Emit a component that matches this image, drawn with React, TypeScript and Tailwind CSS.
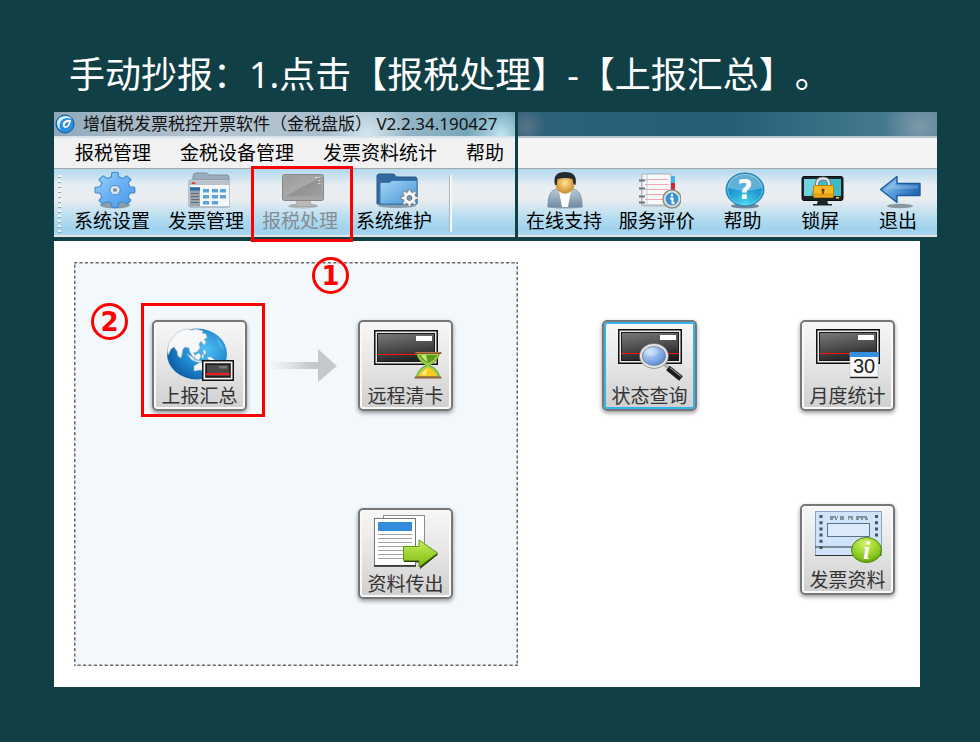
import type { ReactNode } from "react";

const gearPath = (cx: number, cy: number, outer: number, inner: number, teeth = 8) => {
  const step = (Math.PI * 2) / teeth;
  const at = (a: number, r: number) =>
    `${(cx + Math.cos(a) * r).toFixed(2)} ${(cy + Math.sin(a) * r).toFixed(2)}`;
  let d = "";
  for (let i = 0; i < teeth; i++) {
    const a = i * step - Math.PI / 2;
    d += `${i ? "L" : "M"}${at(a - step * 0.3, inner)} L${at(a - step * 0.2, outer)} Q${at(a, outer + 0.6)} ${at(a + step * 0.2, outer)} L${at(a + step * 0.3, inner)} `;
  }
  return d + "Z";
};

/* ---------- toolbar icons, drawn on a 94 x 40 field ---------- */

function ToolIcon({ children, x = 26 }: { children: ReactNode; x?: number }) {
  return (
    <svg className="h-10 w-12" viewBox={`${x} 0 48 40`} aria-hidden="true">
      {children}
    </svg>
  );
}

function GearIcon() {
  return (
    <ToolIcon x={23}>
      <defs>
        <linearGradient id="gearFill" x1="0" y1="0" x2="1" y2="1">
          <stop offset="0" stopColor="#9fd0fb" />
          <stop offset="0.5" stopColor="#68b1f5" />
          <stop offset="1" stopColor="#4a97e6" />
        </linearGradient>
      </defs>
      <ellipse cx="50" cy="34" rx="15" ry="3.5" fill="#4b6070" opacity="0.55" />
      <g transform="translate(50 19) scale(1.13 1)">
        <path d={gearPath(0, 0, 17.5, 13.6)} fill="url(#gearFill)" stroke="#3f88cc" strokeWidth="1" />
        <circle r="4.600" fill="#dfe6ec" stroke="#4a8fd0" strokeWidth="1" />
        <circle r="1.800" fill="#75899a" />
      </g>
    </ToolIcon>
  );
}

function InvoiceFolderIcon() {
  return (
    <ToolIcon x={23}>
      <path d="M34 9V6q0-4 3-4h10q2 0 3 2h18q2 0 2 2v6H34z" fill="#9aabbd" stroke="#7e8e9e" />
      <rect x="30" y="9" width="41" height="27" rx="1.5" fill="#f4f8fb" stroke="#8795a3" />
      <rect x="30.500" y="9.500" width="40" height="4.500" fill="#b9c2ca" />
      <path d="M32.500 13a2 2 0 0 1 4 0z" fill="#e0342c" />
      <rect x="31" y="16" width="10" height="19.500" fill="#9ba4ac" />
      <rect x="31" y="16.500" width="10" height="3" fill="#2b6cae" />
      <path d="M32 22.500h8M32 25.500h8M32 28.500h8M32 31.500h8" stroke="#636c75" strokeWidth="1" />
      <g fill="#5aa2dd">
        <rect x="44" y="18" width="6" height="3.500" /><rect x="53" y="18" width="6" height="3.500" /><rect x="61" y="18" width="6" height="3.500" />
        <rect x="44" y="24" width="6" height="3.500" /><rect x="53" y="24" width="6" height="3.500" /><rect x="61" y="24" width="6" height="3.500" />
        <rect x="44" y="30" width="6" height="3.500" /><rect x="53" y="30" width="6" height="3.500" />
      </g>
    </ToolIcon>
  );
}

function MonitorIcon() {
  return (
    <ToolIcon x={23}>
      <defs>
        <linearGradient id="grayScreen" x1="0" y1="0" x2="1" y2="1">
          <stop offset="0" stopColor="#9b9b9b" />
          <stop offset="0.5" stopColor="#a9a9a9" />
          <stop offset="0.51" stopColor="#929292" />
          <stop offset="1" stopColor="#a0a0a0" />
        </linearGradient>
      </defs>
      <ellipse cx="50" cy="35" rx="15" ry="2.500" fill="#98a2a8" opacity="0.6" />
      <path d="M44 29h13l1 5h5v1.500H38V34h5z" fill="#b9b9b9" stroke="#979797" strokeWidth="0.600" />
      <rect x="29.500" y="3.500" width="41" height="26" rx="2" fill="#a5a5a5" stroke="#858585" />
      <rect x="31.500" y="5.500" width="37" height="20" fill="url(#grayScreen)" />
      <path d="M62 6.500h3M66 6.500h1.500M65 9.500h2.500M65 12.500h2.500" stroke="#d8d8d8" />
    </ToolIcon>
  );
}

function MaintenanceIcon() {
  return (
    <ToolIcon x={23}>
      <defs>
        <linearGradient id="folderBlue" x1="0" y1="0" x2="1" y2="1">
          <stop offset="0" stopColor="#a5d5f6" />
          <stop offset="1" stopColor="#4594d3" />
        </linearGradient>
      </defs>
      <ellipse cx="50" cy="34.500" rx="19" ry="2.500" fill="#44617a" opacity="0.55" />
      <path d="M30 33V5q0-2 2-2h14q2 0 3 3h19q2 0 2 2v25z" fill="#34699f" stroke="#28578a" />
      <path d="M33 33V13q0-1.500 1.500-1.500h8L45 9.500h25V31q0 2-2 2z" fill="url(#folderBlue)" stroke="#3878ae" />
      <path d={gearPath(62.5, 27, 8.5, 6.4)} fill="#f2f4f6" stroke="#69757f" strokeWidth="0.900" />
      <circle cx="62.500" cy="27" r="2.400" fill="#7d97ab" stroke="#66717a" />
    </ToolIcon>
  );
}

function SupportIcon() {
  return (
    <ToolIcon x={26}>
      <defs>
        <linearGradient id="suit" x1="0" y1="0" x2="0" y2="1">
          <stop offset="0" stopColor="#bccbd8" />
          <stop offset="1" stopColor="#6f8ba1" />
        </linearGradient>
        <radialGradient id="face" cx="0.5" cy="0.45" r="0.600">
          <stop offset="0" stopColor="#ffe08f" />
          <stop offset="1" stopColor="#c68724" />
        </radialGradient>
      </defs>
      <ellipse cx="51" cy="35.500" rx="18" ry="2" fill="#516a7b" opacity="0.500" />
      <path d="M34 36q-1-15 8-18l9 3 9-3q9 3 8 18z" fill="url(#suit)" stroke="#7890a3" strokeWidth="0.800" />
      <path d="M45 20l6 3 6-3-3 16h-6z" fill="#fafcfd" />
      <ellipse cx="51" cy="13" rx="9.500" ry="9.500" fill="url(#face)" />
      <path d="M41 14Q38 1 51 1t10.500 13l-2-1-1-5q-7-2-15 0l-1 6z" fill="#252a2f" />
    </ToolIcon>
  );
}

function ReviewIcon() {
  return (
    <ToolIcon x={24}>
      <rect x="32" y="4" width="30" height="32" rx="2" fill="#c9cdd1" />
      <rect x="33" y="3" width="29" height="31" rx="1" fill="#f9f9fa" stroke="#a9adb1" />
      <path d="M36 8.500h23M36 13.500h23M36 18.500h23M36 23.500h23M36 28.500h18" stroke="#f2a5aa" />
      <path d="M38 3v31" stroke="#9cc9e8" strokeWidth="0.800" />
      <path d="M30 9.500h6M30 17.500h6M30 25.500h6M30 31.500h6" stroke="#6d7378" strokeWidth="2" />
      <rect x="62" y="5" width="4" height="7" fill="#42b4e8" />
      <rect x="62" y="12" width="4" height="8" fill="#d5262d" />
      <circle cx="63" cy="28" r="9" fill="#e2e5dd" stroke="#8c918b" strokeWidth="1.500" />
      <circle cx="63" cy="28" r="6.500" fill="#3b93d5" />
      <path d="M63 23v2.500M61 27.500h2.500v4.500h2" fill="none" stroke="#fff" strokeWidth="2" />
    </ToolIcon>
  );
}

function HelpIcon() {
  return (
    <ToolIcon x={24}>
      <defs>
        <radialGradient id="helpBall" cx="0.5" cy="0.950" r="0.900">
          <stop offset="0" stopColor="#4cd4ef" />
          <stop offset="0.600" stopColor="#1b96cf" />
          <stop offset="1" stopColor="#2f8fc0" />
        </radialGradient>
      </defs>
      <ellipse cx="51" cy="35" rx="14" ry="2.500" fill="#47606e" opacity="0.700" />
      <ellipse cx="51" cy="18.500" rx="19" ry="16.500" fill="url(#helpBall)" stroke="#1f7fae" />
      <ellipse cx="51" cy="18.500" rx="17.500" ry="15" fill="none" stroke="#7fd0ee" opacity="0.700" />
      <path d="M34 17a17 14 0 0 1 34 0q-17 5-34 0z" fill="#fff" opacity="0.280" />
      <text x="51" y="28" textAnchor="middle" fontSize="26" fontWeight="700" fill="#fff" fontFamily="DejaVu Sans, sans-serif">?</text>
    </ToolIcon>
  );
}

function LockIcon() {
  return (
    <ToolIcon x={25}>
      <rect x="31" y="5.500" width="41" height="24" rx="2" fill="#1d2226" stroke="#0d1012" />
      <rect x="33" y="8" width="37" height="17" fill="#3bbccb" />
      <path d="M33 8h16L39 25h-6z" fill="#6ed3dc" />
      <path d="M47 29h9l1 4h4v1.500H42V33h4z" fill="#1d2226" />
      <path d="M46 17v-4q0-5.500 6-5.500t6 5.500v4" fill="none" stroke="#777e82" strokeWidth="4" />
      <path d="M46 17v-4q0-5.500 6-5.500t6 5.500v4" fill="none" stroke="#e4e8ea" strokeWidth="2" />
      <rect x="42.500" y="14.500" width="20" height="12" rx="1" fill="#f8ba22" stroke="#bd7f0d" />
      <path d="M43 24h19" stroke="#e89d12" strokeWidth="3" />
      <circle cx="52" cy="19" r="1.600" fill="#5c3b04" />
      <path d="M52 19v4" stroke="#5c3b04" strokeWidth="1.600" />
      <rect x="65" y="26" width="3" height="1.500" fill="#f3d93b" />
    </ToolIcon>
  );
}

function ExitIcon() {
  return (
    <ToolIcon x={25}>
      <defs>
        <linearGradient id="exitArrow" x1="0" y1="0" x2="1" y2="0.600">
          <stop offset="0" stopColor="#3d85cb" />
          <stop offset="0.350" stopColor="#6faee6" />
          <stop offset="1" stopColor="#1d62b0" />
        </linearGradient>
      </defs>
      <ellipse cx="51" cy="35" rx="13" ry="2.200" fill="#64737c" opacity="0.700" />
      <path d="M31.500 18.500L48 5.500v7h23v12H48v7z" fill="url(#exitArrow)" stroke="#1d5aa2" strokeWidth="1.400" strokeLinejoin="round" />
      <path d="M35 18.500L46.500 9.500v5h22.500v3z" fill="#fff" opacity="0.180" />
    </ToolIcon>
  );
}

/* ---------- tile icons, drawn on an 80 x 60 field ---------- */

function TileIcon({ children }: { children: ReactNode }) {
  return (
    <svg className="h-[60px] w-20" viewBox="0 0 80 60" aria-hidden="true">
      {children}
    </svg>
  );
}

function CardDevice({ id }: { id: string }) {
  return (
    <>
      <defs>
        <linearGradient id={id} x1="0.200" y1="0" x2="0.500" y2="1">
          <stop offset="0" stopColor="#757575" />
          <stop offset="0.600" stopColor="#474747" />
          <stop offset="1" stopColor="#1f1f1f" />
        </linearGradient>
      </defs>
      <rect x="8.750" y="3.750" width="62.500" height="33.500" fill="#e9e9e9" stroke="#111" strokeWidth="1.500" />
      <rect x="11.500" y="6.500" width="57" height="28" fill={`url(#${id})`} stroke="#181818" />
      <rect x="50" y="9" width="16" height="5" fill="#fff" />
      <rect x="11" y="27" width="58" height="1" fill="#ff1010" />
    </>
  );
}

function GlobeIcon() {
  return (
    <TileIcon>
      <defs>
        <radialGradient id="ocean" cx="0.650" cy="0.400" r="0.650">
          <stop offset="0" stopColor="#4fc0f3" />
          <stop offset="0.600" stopColor="#218bd2" />
          <stop offset="1" stopColor="#0e62aa" />
        </radialGradient>
      </defs>
      <ellipse cx="37" cy="28" rx="30" ry="25.500" fill="url(#ocean)" />
      <path
        d="M7.500 24Q8 17 12 12 17 6 22 4l5-1 5 1 4-1 7 2-1 2 4 1 1 4-3 1 2 3-2 3-3-4-2 3 1 4-3 4-4 1 2 2 1 4-3-2-3-5-1-4-4-1-2 2-1 5-1 4-3-2-1-5-3-4-3 2-3 6z"
        fill="#f6f8fa"
        stroke="#aebdc8"
        strokeWidth="0.600"
        strokeLinejoin="round"
      />
      <path
        d="M27 28l4 2 4 4 6 1 2 2-6-1-5-2zM35 29l4-2 2 3-2 4-4-1zM42 28l2 1-1 4-1-1zM44 23l2 3-1 3-2-3zM47 31l4 0 5 4-2 1-5-2zM34 40l5-3 3-1 2 2 2-3 4 4v5l-5 1-5-1-6 1z"
        fill="#f4f6f7"
        stroke="#9fb4c3"
        strokeWidth="0.500"
      />
      <path d="M56 11q7 6 8 14-5-4-8-14z" fill="#fff" opacity="0.180" />
      <rect x="42.750" y="34.750" width="30.500" height="19.500" fill="#f2f2f2" stroke="#111" strokeWidth="1.500" />
      <rect x="46" y="38" width="24" height="13" fill="#4a4a4a" stroke="#111" strokeWidth="1.500" />
      <rect x="59" y="40" width="8" height="2.500" fill="#777" />
      <rect x="46" y="47" width="24" height="2" fill="#f01818" />
    </TileIcon>
  );
}

function HourglassIcon() {
  return (
    <TileIcon>
      <g transform="translate(0 1)">
        <CardDevice id="deviceClear" />
      </g>
      <path d="M50.500 27h23q-1.500 8-10 12.500 8.500 3 10 11.500h-23q1.500-8.500 10-11.500-8.500-4.500-10-12.500z" fill="#9fd04f" stroke="#5f9a20" />
      <path d="M53 29h18q-2 5-9 8-7-3-9-8z" fill="#5d9a1e" />
      <path d="M55 29h5l1.500 7q-5-3-6.500-7z" fill="#c4e67a" />
      <path d="M53 50q2-6 9-8.500 7 2.500 9 8.500z" fill="#ffcb1c" />
      <path d="M56 49q1-4 5-6l-1 6z" fill="#fff3a0" />
      <path d="M49.500 27h25M49.500 51.500h25" stroke="#8b5529" strokeWidth="2.200" strokeLinecap="round" />
      <path d="M50 26.400h24M50 51h24" stroke="#c48b52" strokeWidth="0.700" />
    </TileIcon>
  );
}

function MagnifierIcon() {
  return (
    <TileIcon>
      <defs>
        <radialGradient id="lens" cx="0.350" cy="0.300" r="0.800">
          <stop offset="0" stopColor="#c8defb" />
          <stop offset="0.600" stopColor="#79a6e6" />
          <stop offset="1" stopColor="#4371bd" />
        </radialGradient>
      </defs>
      <CardDevice id="deviceStatus" />
      <path d="M54 38l6 5" stroke="#b5b5b5" strokeWidth="4" />
      <path d="M58 42l13 10.500" stroke="#1b1b1b" strokeWidth="6" />
      <path d="M60 41.500l11 9" stroke="#8a8a8a" strokeWidth="1.200" />
      <ellipse cx="44" cy="30" rx="13" ry="11" fill="url(#lens)" stroke="#85878b" strokeWidth="3.500" />
      <ellipse cx="44" cy="30" rx="13" ry="11" fill="none" stroke="#e3e5e8" strokeWidth="2" />
      <ellipse cx="41" cy="26" rx="7" ry="4" fill="#fff" opacity="0.250" />
    </TileIcon>
  );
}

function CalendarIcon() {
  return (
    <TileIcon>
      <CardDevice id="deviceMonth" />
      <rect x="42" y="27" width="28" height="24" fill="#fafafa" stroke="#bfc3c6" strokeWidth="0.600" />
      <path d="M42 51.500h28" stroke="#222" strokeWidth="1.400" />
      <rect x="42" y="26" width="29" height="5" fill="#3490dc" />
      <text x="56" y="47" textAnchor="middle" fontSize="20" fill="#222" fontFamily="Liberation Sans, sans-serif">30</text>
    </TileIcon>
  );
}

function ExportIcon() {
  return (
    <TileIcon>
      <defs>
        <linearGradient id="exportArrow" x1="0" y1="0" x2="0" y2="1">
          <stop offset="0" stopColor="#c5ee5c" />
          <stop offset="1" stopColor="#7dbb10" />
        </linearGradient>
      </defs>
      <rect x="17.500" y="1.500" width="41" height="47" fill="#fdfdfd" stroke="#8d8d8d" />
      <rect x="8.500" y="4.500" width="41" height="47" fill="#fff" stroke="#777" />
      <path d="M8 52h42" stroke="#222" strokeWidth="1.600" />
      <rect x="12" y="8" width="34" height="9" fill="#338bdb" />
      <path d="M12 20.500h34M12 24.500h34M12 28.500h34M12 32.500h34M12 36.500h34M12 40.500h34M12 44.500h34" stroke="#a2a2a2" strokeWidth="1.200" />
      <path d="M38 33.500h16V27l18 13.500L54 55v-7H38z" fill="#2c3a12" />
      <path d="M37.500 32.500H53V26l18.500 13L53 53v-6.500H37.500z" fill="url(#exportArrow)" stroke="#5f9610" />
    </TileIcon>
  );
}

function InvoiceInfoIcon() {
  return (
    <TileIcon>
      <defs>
        <radialGradient id="infoBall" cx="0.450" cy="0.250" r="0.800">
          <stop offset="0" stopColor="#d2f266" />
          <stop offset="0.700" stopColor="#85c81c" />
          <stop offset="1" stopColor="#5c9a0a" />
        </radialGradient>
      </defs>
      <rect x="7.500" y="1.500" width="66" height="44" fill="#cfe4fa" stroke="#86a5c4" />
      <path d="M7 37h66M7 45.500h66" stroke="#2d343b" strokeWidth="1.200" />
      <path d="M13 5v36M68.500 5v24" stroke="#4d5358" strokeWidth="3" strokeDasharray="3 3.200" />
      <path d="M22 7h6m1 0h1m2 0h4M22 9h3m2 0h2m3 0h4M40 7h5m3 0h11M40 9h1m2 0h2m3 0h3m2 0h2m2 0h3" stroke="#6b767f" strokeWidth="1.500" />
      <rect x="19.500" y="13.500" width="42" height="13" fill="#dbeafa" stroke="#5f7184" />
      <ellipse cx="58.500" cy="40" rx="15" ry="12.500" fill="url(#infoBall)" stroke="#4f850c" />
      <text x="58.500" y="49" textAnchor="middle" fontSize="26" fontWeight="700" fontStyle="italic" fill="#fff" fontFamily="Liberation Serif, serif">i</text>
    </TileIcon>
  );
}

/* ---------- controls ---------- */

const ui = "font-['Noto_Sans','Noto_Sans_CJK_SC',sans-serif]";

function ToolButton({ label, icon, disabled, marked }: { label: string; icon: ReactNode; disabled?: boolean; marked?: boolean }) {
  return (
    <button
      type="button"
      disabled={disabled}
      className={`relative flex flex-col items-center whitespace-nowrap text-[19px] leading-5 ${disabled ? "text-[#858b90]" : "text-black"}`}
    >
      {icon}
      {label}
      {marked && <span className="absolute -top-[5px] -right-[6px] -bottom-[7px] -left-[2px] border-[3px] border-[#fe0000]" />}
    </button>
  );
}

function Tile({ label, icon, focused, marked }: { label: string; icon: ReactNode; focused?: boolean; marked?: boolean }) {
  return (
    <button
      type="button"
      className={`relative flex h-[91px] w-[95px] flex-col items-center rounded-[5px] border-2 border-[#777] bg-linear-to-b from-[#f7f7f7] from-0% via-[#e6e6e6] via-48% to-[#cfcfcf] to-100% pt-[4px] whitespace-nowrap text-[19px] leading-5 text-[#333] shadow-[0_2px_4px_#0006] ${focused ? "inset-ring-2 inset-ring-[#35b4e8]" : "inset-ring-2 inset-ring-[#f8f8f8]"}`}
    >
      {icon}
      {label}
      {marked && <span className="absolute -top-[19px] -right-[20px] -bottom-[8px] -left-[13px] border-[3px] border-[#fe0000]" />}
    </button>
  );
}

function StepBadge({ n, className }: { n: number; className: string }) {
  return (
    <span className={`absolute flex size-[37px] items-center justify-center rounded-full border-[3px] border-[#fe0000] font-['DejaVu_Sans',sans-serif] text-[26px] leading-none font-bold text-[#fe0000] ${className}`}>
      {n}
    </span>
  );
}

const toolbarBg =
  "bg-[linear-gradient(to_bottom,#b2d9ef_0px,#e6edf2_16px,#ebeef0_30px,#bddff0_46px,#9fd2ee_60px,#a8d6ee_66px)] border-b-2 border-[#e4e4e4]";

export default function App() {
  return (
    <div className={`min-h-screen bg-[#104046] pr-[43px] pb-[55px] pl-[54px] ${ui}`}>
      <h1 className="pt-[48px] pl-[15px] text-[36px] leading-[54px] font-normal whitespace-nowrap text-white [text-spacing-trim:space-all]">
        手动抄报：1.点击【报税处理】-【上报汇总】。
      </h1>

      <header className="mt-[10px] grid grid-cols-[461fr_419fr] gap-[3px]">
        <div>
          <div className="flex h-[26px] items-center border-b-2 border-[#d9e2e8] bg-[radial-gradient(circle_34px_at_97%_100%,#c4e6f2_0%,transparent_100%),radial-gradient(circle_40px_at_68%_100%,#d5e6ee_0%,transparent_100%),linear-gradient(to_right,#8ba8b8_0%,#a3b7c5_12%,#b4c4d0_38%,#aabfcc_60%,#8fb3c4_80%,#5c96ad_100%)] pl-[1px]">
            <svg className="h-5 w-5" viewBox="0 0 20 20" aria-hidden="true">
              <circle cx="10" cy="10" r="9" fill="#2a8fe0" stroke="#0f58a3" />
              <path d="M2 8q2-6 8-6 5 0 7 3-7-3-11 2-3 5 0 9-4-2-4-8z" fill="#d7efff" />
              <path d="M16 6q-6-1-8 3-1 4 2 5 5 0 6-8zm-2 2q-1 4-3.500 4.500-1.500-.5-.5-2.500t4-2z" fill="#fff" fillRule="evenodd" />
            </svg>
            <span className="ml-[8px] text-[17px] leading-6 whitespace-pre text-[#111]">增值税发票税控开票软件（金税盘版） V2.2.34.190427</span>
          </div>
          <nav className="flex h-[31px] items-center gap-[29px] border-b border-[#a6a6a6] bg-[#f1f1f1] pl-[21px] text-[19px] leading-6 text-black">
            <button type="button">报税管理</button>
            <button type="button">金税设备管理</button>
            <button type="button">发票资料统计</button>
            <button type="button">帮助</button>
          </nav>
          <div className={`flex h-[68px] pt-[2px] ${toolbarBg}`}>
            <span className="mt-[4px] mr-[4px] ml-[4px] h-[58px] w-[3px] bg-[repeating-linear-gradient(to_bottom,#f6f6f6_0px,#f6f6f6_2px,#8fa3ae_2px,#8fa3ae_3px,transparent_3px,transparent_5px)]" />
            <div className="grid w-[376px] grid-cols-4">
              <ToolButton label="系统设置" icon={<GearIcon />} />
              <ToolButton label="发票管理" icon={<InvoiceFolderIcon />} />
              <ToolButton label="报税处理" icon={<MonitorIcon />} disabled marked />
              <ToolButton label="系统维护" icon={<MaintenanceIcon />} />
            </div>
            <span className="mt-[4px] ml-[8px] h-[57px] w-[3px] border-l border-[#a9b4bb] bg-[#f7f7f7]" />
          </div>
        </div>

        <div>
          <div className="h-[26px] border-b-2 border-[#b5c4cb] bg-[radial-gradient(circle_36px_at_96%_60%,#7f99aa_0%,transparent_100%),radial-gradient(circle_20px_at_2%_60%,#5a7489_0%,transparent_100%),linear-gradient(to_right,#2c6179_0%,#265e76_50%,#3a7086_75%,#4f8296_100%)]" />
          <div className="h-[31px] border-b border-[#a6a6a6] bg-[#f4f4f4]" />
          <div className={`grid h-[68px] grid-cols-[92fr_94fr_78fr_78fr_78fr] pt-[2px] ${toolbarBg}`}>
            <ToolButton label="在线支持" icon={<SupportIcon />} />
            <ToolButton label="服务评价" icon={<ReviewIcon />} />
            <ToolButton label="帮助" icon={<HelpIcon />} />
            <ToolButton label="锁屏" icon={<LockIcon />} />
            <ToolButton label="退出" icon={<ExitIcon />} />
          </div>
        </div>
      </header>

      <main className="mt-[4px] mr-[17px] flex bg-white py-[21px] pr-[25px] pl-[20px]">
        <section className="relative grid h-[404px] shrink-0 grid-cols-[95px_111px_95px] content-start gap-y-[97px] bg-[#f3f8fc] pt-[58px] pr-[65px] pl-[78px]">
          <svg className="pointer-events-none absolute inset-0 h-full w-full" aria-hidden="true">
            <rect width="100%" height="100%" fill="none" stroke="#6c6c6c" strokeWidth="3" strokeDasharray="3.200 2.200" />
          </svg>
          <StepBadge n={1} className="-top-[5px] left-[238px]" />
          <StepBadge n={2} className="top-[41px] left-[17px]" />
          <Tile label="上报汇总" icon={<GlobeIcon />} marked />
          <svg className="mt-[28px] ml-[23px] h-9 w-[68px]" viewBox="0 0 68 36" aria-hidden="true">
            <defs>
              <linearGradient id="flow" x1="0" y1="0" x2="1" y2="0">
                <stop offset="0" stopColor="#d0d2d4" stopOpacity="0" />
                <stop offset="0.600" stopColor="#c6c8ca" />
                <stop offset="1" stopColor="#c6c8ca" />
              </linearGradient>
            </defs>
            <path d="M0 14h48V1l19 17-19 16V21H0z" fill="url(#flow)" />
          </svg>
          <Tile label="远程清卡" icon={<HourglassIcon />} />
          <div className="col-start-3">
            <Tile label="资料传出" icon={<ExportIcon />} />
          </div>
        </section>

        <section className="grid flex-1 grid-cols-[95px_95px] content-start justify-between gap-y-[93px] pt-[58px] pl-[84px]">
          <Tile label="状态查询" icon={<MagnifierIcon />} focused />
          <Tile label="月度统计" icon={<CalendarIcon />} />
          <div className="col-start-2">
            <Tile label="发票资料" icon={<InvoiceInfoIcon />} />
          </div>
        </section>
      </main>
    </div>
  );
}
